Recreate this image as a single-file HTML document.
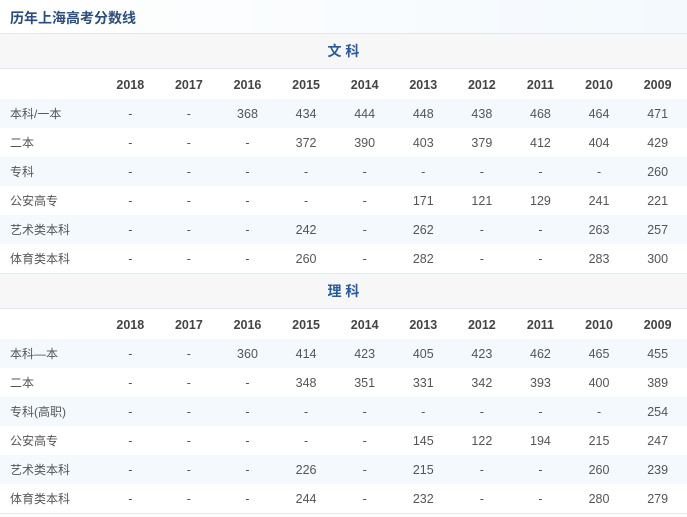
<!DOCTYPE html><html><head><meta charset="utf-8"><style>
*{margin:0;padding:0;box-sizing:border-box}
body{width:687px;height:517px;overflow:hidden;background:#fff;font-family:"Liberation Sans","Noto Sans CJK SC",sans-serif;}
.title{height:34px;background:linear-gradient(90deg,#fff,#f3f9fd);border-bottom:1px solid #dce8f2;padding:8px 0 0 10px;font-size:14px;font-weight:bold;color:#2d4d7c}
.sec{height:35px;background:#f7f7f7;border-bottom:1px solid #e3e9ee;text-align:center;font-weight:bold;color:#2a5a9a;font-size:14px;line-height:34px}
.r{display:flex;height:29px;align-items:center;font-size:12.5px;color:#555}
.r.alt{background:#f3f9fd}
.r div{width:58.6px;text-align:center}
.r div:first-child{width:101px;text-align:left;padding-left:10px;font-size:12px}
.h{font-weight:bold;color:#444;font-size:12.5px;height:30px;padding-top:2px}
.last{border-bottom:1px solid #e3e9ee;height:30px}
</style></head><body>
<div class="title">历年上海高考分数线</div>
<div class="sec">文 科</div>
<div class="r h"><div></div><div>2018</div><div>2017</div><div>2016</div><div>2015</div><div>2014</div><div>2013</div><div>2012</div><div>2011</div><div>2010</div><div>2009</div></div>
<div class="r alt"><div>本科/一本</div><div>-</div><div>-</div><div>368</div><div>434</div><div>444</div><div>448</div><div>438</div><div>468</div><div>464</div><div>471</div></div>
<div class="r"><div>二本</div><div>-</div><div>-</div><div>-</div><div>372</div><div>390</div><div>403</div><div>379</div><div>412</div><div>404</div><div>429</div></div>
<div class="r alt"><div>专科</div><div>-</div><div>-</div><div>-</div><div>-</div><div>-</div><div>-</div><div>-</div><div>-</div><div>-</div><div>260</div></div>
<div class="r"><div>公安高专</div><div>-</div><div>-</div><div>-</div><div>-</div><div>-</div><div>171</div><div>121</div><div>129</div><div>241</div><div>221</div></div>
<div class="r alt"><div>艺术类本科</div><div>-</div><div>-</div><div>-</div><div>242</div><div>-</div><div>262</div><div>-</div><div>-</div><div>263</div><div>257</div></div>
<div class="r last"><div>体育类本科</div><div>-</div><div>-</div><div>-</div><div>260</div><div>-</div><div>282</div><div>-</div><div>-</div><div>283</div><div>300</div></div>
<div class="sec">理 科</div>
<div class="r h"><div></div><div>2018</div><div>2017</div><div>2016</div><div>2015</div><div>2014</div><div>2013</div><div>2012</div><div>2011</div><div>2010</div><div>2009</div></div>
<div class="r alt"><div>本科—本</div><div>-</div><div>-</div><div>360</div><div>414</div><div>423</div><div>405</div><div>423</div><div>462</div><div>465</div><div>455</div></div>
<div class="r"><div>二本</div><div>-</div><div>-</div><div>-</div><div>348</div><div>351</div><div>331</div><div>342</div><div>393</div><div>400</div><div>389</div></div>
<div class="r alt"><div>专科(高职)</div><div>-</div><div>-</div><div>-</div><div>-</div><div>-</div><div>-</div><div>-</div><div>-</div><div>-</div><div>254</div></div>
<div class="r"><div>公安高专</div><div>-</div><div>-</div><div>-</div><div>-</div><div>-</div><div>145</div><div>122</div><div>194</div><div>215</div><div>247</div></div>
<div class="r alt"><div>艺术类本科</div><div>-</div><div>-</div><div>-</div><div>226</div><div>-</div><div>215</div><div>-</div><div>-</div><div>260</div><div>239</div></div>
<div class="r last"><div>体育类本科</div><div>-</div><div>-</div><div>-</div><div>244</div><div>-</div><div>232</div><div>-</div><div>-</div><div>280</div><div>279</div></div>
</body></html>
